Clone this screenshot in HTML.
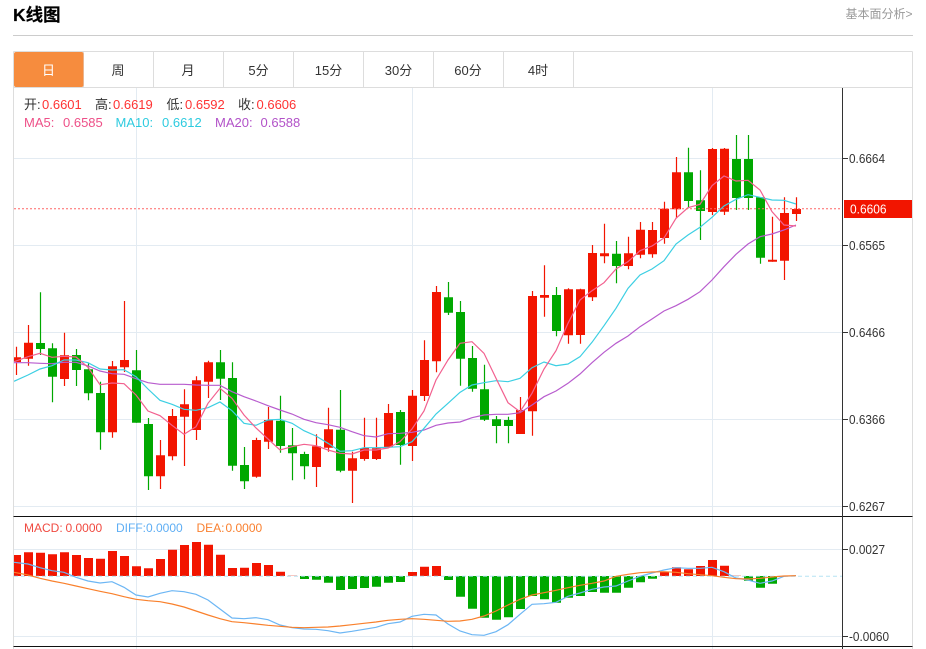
<!DOCTYPE html>
<html lang="zh">
<head>
<meta charset="utf-8">
<title>K线图</title>
<style>
html,body{margin:0;padding:0;background:#fff;width:926px;height:649px;overflow:hidden}
svg{display:block;font-family:"Liberation Sans","Noto Sans CJK SC",sans-serif}
</style>
</head>
<body>
<svg width="926" height="649" viewBox="0 0 926 649" xmlns="http://www.w3.org/2000/svg">
<defs><clipPath id="c"><rect x="14" y="88" width="828" height="561"/></clipPath></defs>
<rect width="926" height="649" fill="#fff"/>

<text x="13" y="21" font-size="17.5" font-weight="700" fill="#000" stroke="#000" stroke-width=".2">K线图</text>
<text x="845.5" y="18" font-size="12" fill="#999">基本面分析&gt;</text>
<path d="M13 35.5H913" stroke="#ccc" fill="none"/>

<path d="M13.5 51.5H912.5M13.5 87.5H912.5M13.5 51.5V649M912.5 51.5V649M83.5 52V87M153.5 52V87M223.5 52V87M293.5 52V87M363.5 52V87M433.5 52V87M503.5 52V87M573.5 52V87" stroke="#ddd" fill="none"/>
<rect x="14" y="52" width="69.5" height="35" rx="2" fill="#f68c3e"/>
<g font-size="13" fill="#333" text-anchor="middle">
<text x="48.5" y="75" fill="#fff">日</text>
<text x="118" y="75">周</text>
<text x="188" y="75">月</text>
<text x="258.5" y="75">5分</text>
<text x="328.5" y="75">15分</text>
<text x="398.5" y="75">30分</text>
<text x="468" y="75">60分</text>
<text x="538" y="75">4时</text>
</g>

<path d="M14 158.5H842M14 245.5H842M14 332.5H842M14 419.5H842M14 506.5H842M14 549.5H842M14 636.5H842M136.5 88V649M412.5 88V649M712.5 88V649" stroke="#e3ebf2" fill="none"/>

<g clip-path="url(#c)" fill="none">
<path stroke="#f21500" stroke-width="1.2" d="M16.5 346.7V375M28.5 325V365.7M64.5 332.7V386M112.5 361V437.7M124.5 301V372M160.5 440V489M172.5 409V460.3M184.5 389.3V466M196.5 376.3V440M208.5 360.7V398M256.5 437.7V477.7M268.5 407V449M316.5 434.3V487M328.5 407.7V451.7M352.5 451.7V503M364.5 417.7V460.7M376.5 417.7V460M388.5 404V448.3M412.5 390V461M424.5 340.3V401M436.5 286V372.3M520.5 397V434M532.5 291V435.7M544.5 265.3V316.7M568.5 288.3V343.7M580.5 288.7V343.7M592.5 245V301M604.5 223.7V263.3M628.5 236.7V269.3M640.5 222V258.3M652.5 222V257.7M664.5 201.7V243.7M676.5 157V218.3M712.5 148V215M724.5 148V215M772.5 216.7V261.7M784.5 197.3V280M796.5 197.3V221"/>
<path stroke="#f21500" stroke-width="9" d="M16.5 357.3V362M28.5 342.7V358.7M64.5 355.3V379M112.5 366.3V432.3M124.5 360V367.3M160.5 455.3V476.3M172.5 416V456.3M184.5 404.3V416.7M196.5 380.3V430M208.5 362.3V381.7M256.5 440V476.7M268.5 420V441.7M316.5 446.3V467M328.5 429.3V447.7M352.5 458.3V470.7M364.5 448V459M376.5 448.3V459M388.5 413V447.3M412.5 395.7V446M424.5 360V396M436.5 292V361.3M520.5 410V434M532.5 296V411.3M544.5 295V297.7M568.5 289.3V335.3M580.5 289.3V335M592.5 253V297.3M604.5 253.3V256.3M628.5 253.3V266M640.5 229.7V254.7M652.5 230V254.3M664.5 208.7V238M676.5 172.3V209.3M712.5 149V212M724.5 148.7V211.7M772.5 259.7V261.7M784.5 213V260.7M796.5 209V214"/>
<path stroke="#00a800" stroke-width="1.2" d="M40.5 292.3V355M52.5 343.3V402.3M76.5 349V386M88.5 363.3V400.3M100.5 381.7V449.7M136.5 350V422.7M148.5 418V490M220.5 350V400M232.5 362.3V470.7M244.5 447V489M280.5 395.7V452.7M292.5 428V480.3M304.5 451.7V479.3M340.5 390V472.3M400.5 410V464.7M448.5 282V315M460.5 301V385.7M472.5 346V391.7M484.5 364.7V421M496.5 416V443.3M508.5 416.7V443.3M556.5 287V336.3M616.5 241V283.3M688.5 147.7V208.3M700.5 170.3V240M736.5 135V210M748.5 135V210M760.5 197V263.7"/>
<path stroke="#00a800" stroke-width="9" d="M40.5 343V349M52.5 348.3V376.7M76.5 355V370M88.5 369.3V393.3M100.5 393V432.3M136.5 370.3V422.7M148.5 424V476.3M220.5 362.3V378.7M232.5 378V465.7M244.5 465V481.3M280.5 420.7V446M292.5 445.3V453.3M304.5 454V466.3M340.5 429.7V470.7M400.5 412V445M448.5 297.3V312.7M460.5 312V358.7M472.5 358V388.7M484.5 389.3V419.7M496.5 419.3V426M508.5 420V426M556.5 295V331M616.5 253.7V266M688.5 172.3V201M700.5 200.3V211M736.5 159V198M748.5 159V198M760.5 197.3V257.7"/>

<polyline stroke="#b85cce" stroke-width="1.2" points="14,362.7 28,362.7 40,363.3 52,363.7 64,362.3 76,362.3 88,366 100,371 112,373.7 124,374.3 136,378.7 148,382.7 160,384.3 172,384.3 184,384.3 196,385 208,385.3 220,385.3 232,391.7 244,396.7 256,401 268,405.7 280,410 292,414 304,419.3 316,422.7 328,424.7 340,427.3 352,431.7 364,435.7 376,437 388,433.7 400,433.3 412,432.3 424,430 436,425.3 448,423 460,422 472,417.7 484,415 496,414.3 508,414.3 520,412.7 532,405 544,396.7 556,391 568,383.3 580,374 592,362.7 604,352.3 616,343.3 628,336 640,326.7 652,319 664,311 676,305.7 688,299.3 700,291.7 712,280 724,266.7 736,254.3 748,244 760,236.7 772,234 784,230 796,225"/>
<polyline stroke="#3ccfe3" stroke-width="1.2" points="14,381.3 28,375 40,369 52,365.7 64,360 76,360 88,362.7 100,369 112,370 124,369.7 136,376.7 148,389 160,400.3 172,404.3 184,409.3 196,410.3 208,407.7 220,402 232,410.7 244,423.3 256,425.3 268,420 280,419.3 292,423.3 304,430.7 316,436 328,443.3 340,451.3 352,450.7 364,447.7 376,447.7 388,447.3 400,446.7 412,441.7 424,428.3 436,414 448,403.3 460,392.3 472,385 484,382.7 496,380.7 508,381.7 520,378.3 532,367.7 544,362 556,365.7 568,364 580,356.7 592,342.3 604,325.7 616,308.3 628,288.3 640,275 652,269 664,260.7 676,244 688,235 700,227.3 712,217.3 724,206 736,199.3 748,194.7 760,197.3 772,200 784,200.3 796,204"/>
<polyline stroke="#f2608f" stroke-width="1.2" points="14,361.7 28,356.7 40,353.3 52,357.3 64,356.3 76,357 88,367.3 100,384.7 112,383 124,383.7 136,395 148,411 160,415.7 172,425.3 184,434.3 196,426.7 208,403.3 220,388.3 232,398.3 244,415 256,428 268,439 280,450 292,446.7 304,444.3 316,445.7 328,450 340,453.3 352,454 364,450 376,450 388,448 400,441.7 412,429 424,411 436,380 448,360 460,343.3 472,341.7 484,353.3 496,378.3 508,402.7 520,411.7 532,393.3 544,369 556,350.7 568,323.3 580,300 592,290.7 604,282.7 616,269 628,261.7 640,250.7 652,246 664,238 676,218.3 688,207.7 700,204.3 712,185.7 724,176 736,181 748,180.3 760,190 772,211.7 784,225 796,226"/>

<path d="M14 208.8H842" stroke="#f66" stroke-dasharray="2 2"/>

<path stroke="#f21500" stroke-width="9" d="M16.5 555V576M28.5 552.3V576M40.5 552.7V576M52.5 554.3V576M64.5 552.3V576M76.5 555V576M88.5 558V576M100.5 558.7V576M112.5 551V576M124.5 556V576M136.5 566.3V576M148.5 568.3V576M160.5 559V576M172.5 549.7V576M184.5 545V576M196.5 542V576M208.5 544.7V576M220.5 554.7V576M232.5 568V576M244.5 567.7V576M256.5 563V576M268.5 565V576M280.5 571.7V576M412.5 572V576M424.5 566.7V576M436.5 566V576M664.5 571.7V576M676.5 567.3V576M688.5 569.3V576M700.5 566V576M712.5 560V576M724.5 565.7V576"/>
<path stroke="#f9c6c0" stroke-width="9" d="M292.5 575V576M736.5 575V576"/>
<path stroke="#00a800" stroke-width="9" d="M304.5 576V579M316.5 576V579.7M328.5 576V582.7M340.5 576V590M352.5 576V589M364.5 576V588M376.5 576V586.7M388.5 576V582.7M400.5 576V582M448.5 576V580M460.5 576V596.7M472.5 576V608.7M484.5 576V617.7M496.5 576V619.7M508.5 576V617.3M520.5 576V609M532.5 576V596M544.5 576V599.3M556.5 576V602.7M568.5 576V597.7M580.5 576V596M592.5 576V592M604.5 576V592.7M616.5 576V592.7M628.5 576V587.7M640.5 576V582.3M652.5 576V578.7M748.5 576V580.7M760.5 576V587.7M772.5 576V583.7"/>
<path d="M14 576.2H842" stroke="#a9dff2" stroke-dasharray="4 3" opacity=".85"/>

<polyline stroke="#6cb6f4" stroke-width="1.2" points="14,562.3 28,564 40,567.7 52,570.7 64,572.3 76,577.3 88,581 100,583 112,581.7 124,587.3 136,595 148,597 160,593.3 172,590.7 184,591.7 196,594.3 208,600 220,609 232,618 244,618.7 256,617.7 268,619.7 280,625 292,627.7 304,629 316,629.3 328,630.7 340,633 352,631.3 364,629.3 376,627.3 388,623.7 400,622 412,616.3 424,614.3 436,615 448,624 460,631 472,634.7 484,635.3 496,631.7 508,624.7 520,614.3 532,604.3 544,603.7 556,602.3 568,596.3 580,593 592,589.3 604,587 616,586 628,581 640,576.3 652,573 664,570 676,567.7 688,568.3 700,568.3 712,567.3 724,571.7 736,578 748,580 760,583.3 772,581 784,576.3 796,575.7"/>
<polyline stroke="#f9802c" stroke-width="1.2" points="14,572.3 28,575 40,578.3 52,581 64,583.3 76,586 88,588.7 100,591.3 112,593.7 124,596.7 136,599.3 148,600.7 160,601.7 172,604 184,607 196,611 208,615 220,618.7 232,621.7 244,622.7 256,624 268,625.3 280,626.3 292,627.3 304,627.7 316,627.3 328,627 340,626 352,624.7 364,623.3 376,622 388,620.3 400,619.3 412,618.7 424,619.3 436,620.3 448,621.3 460,621 472,619.3 484,616 496,611 508,605 520,599.3 532,595 544,592.7 556,590.3 568,587.7 580,585.3 592,583.3 604,581 616,576.3 628,574.3 640,572.7 652,572 664,571.7 676,572.3 688,573.7 700,574.7 712,575.7 724,577.3 736,578.7 748,579 760,578.3 772,577 784,576 796,575.7"/>
</g>

<path d="M13.5 516.5H912.5M13.5 646.5H912.5" stroke="#111" fill="none"/>
<path d="M842.5 88V649M842 158.5H848M842 245.5H848M842 332.5H848M842 419.5H848M842 506.5H848M842 549.5H848M842 636.5H848" stroke="#333" fill="none"/>

<rect x="844" y="200" width="68" height="18" fill="#f21500"/>
<g font-size="13" fill="#333" lengthAdjust="spacingAndGlyphs">
<text x="849" y="163" textLength="36" lengthAdjust="spacingAndGlyphs">0.6664</text>
<text x="850" y="213.5" fill="#fff" textLength="36.5" lengthAdjust="spacingAndGlyphs">0.6606</text>
<text x="849" y="250" textLength="36" lengthAdjust="spacingAndGlyphs">0.6565</text>
<text x="849" y="337" textLength="36" lengthAdjust="spacingAndGlyphs">0.6466</text>
<text x="849" y="424" textLength="36" lengthAdjust="spacingAndGlyphs">0.6366</text>
<text x="849" y="511" textLength="36" lengthAdjust="spacingAndGlyphs">0.6267</text>
<text x="849" y="554" textLength="36" lengthAdjust="spacingAndGlyphs">0.0027</text>
<text x="849" y="641" textLength="40" lengthAdjust="spacingAndGlyphs">-0.0060</text>
</g>

<g font-size="13">
<text x="24" y="109" fill="#333">开:</text><text x="42" y="109" fill="#f33">0.6601</text>
<text x="95" y="109" fill="#333">高:</text><text x="113" y="109" fill="#f33">0.6619</text>
<text x="166.5" y="109" fill="#333">低:</text><text x="185" y="109" fill="#f33">0.6592</text>
<text x="238" y="109" fill="#333">收:</text><text x="256.5" y="109" fill="#f33">0.6606</text>
<text x="24" y="127" fill="#ee5088">MA5:</text><text x="63" y="127" fill="#ee5088">0.6585</text>
<text x="115.5" y="127" fill="#2ecbdf">MA10:</text><text x="162" y="127" fill="#2ecbdf">0.6612</text>
<text x="215" y="127" fill="#b252c8">MA20:</text><text x="260.5" y="127" fill="#b252c8">0.6588</text>
</g>
<g font-size="12">
<text x="24" y="532" fill="#f04a40">MACD:</text><text x="65.5" y="532" fill="#f04a40">0.0000</text>
<text x="116" y="532" fill="#5eaef4">DIFF:</text><text x="146" y="532" fill="#5eaef4">0.0000</text>
<text x="196.5" y="532" fill="#f98030">DEA:</text><text x="225.5" y="532" fill="#f98030">0.0000</text>
</g>
</svg>
</body>
</html>
